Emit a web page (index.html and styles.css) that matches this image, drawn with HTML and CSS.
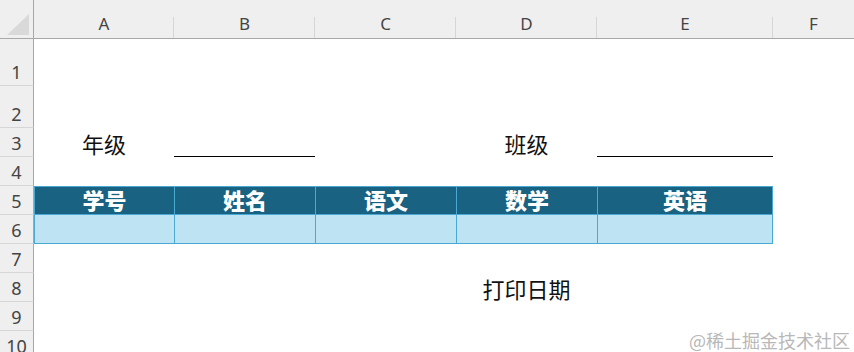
FILE: index.html
```html
<!DOCTYPE html>
<html lang="zh">
<head>
<meta charset="utf-8">
<link rel="stylesheet" href="styles.css">
</head>
<body>
<div class="sheet">
  <div class="corner"><svg width="34" height="39" viewBox="0 0 34 39"><polygon points="7,35 29,14 29,35" fill="#d9d9d9"/></svg></div>
  <div class="colh"><span>A</span></div>
  <div class="colh"><span>B</span></div>
  <div class="colh"><span>C</span></div>
  <div class="colh"><span>D</span></div>
  <div class="colh"><span>E</span></div>
  <div class="colh last"><span>F</span></div>

  <div class="rowh">1</div><div class="cell span6"></div>
  <div class="rowh">2</div><div class="cell span6"></div>

  <div class="rowh">3</div>
  <div class="cell txt">年级</div>
  <div class="cell uline"></div>
  <div class="cell"></div>
  <div class="cell txt">班级</div>
  <div class="cell uline"></div>
  <div class="cell"></div>

  <div class="rowh">4</div><div class="cell span6"></div>

  <div class="rowh">5</div>
  <div class="cell th">学号</div>
  <div class="cell th">姓名</div>
  <div class="cell th">语文</div>
  <div class="cell th">数学</div>
  <div class="cell th end">英语</div>
  <div class="cell"></div>

  <div class="rowh">6</div>
  <div class="cell td"></div>
  <div class="cell td"></div>
  <div class="cell td"></div>
  <div class="cell td"></div>
  <div class="cell td end"></div>
  <div class="cell"></div>

  <div class="rowh">7</div><div class="cell span6"></div>

  <div class="rowh">8</div>
  <div class="cell"></div>
  <div class="cell"></div>
  <div class="cell"></div>
  <div class="cell txt date">打印日期</div>
  <div class="cell"></div>
  <div class="cell"></div>

  <div class="rowh">9</div><div class="cell span6"></div>
  <div class="rowh">10</div><div class="cell span6"></div>
</div>
<div class="watermark">@稀土掘金技术社区</div>
</body>
</html>
```

FILE: styles.css
```css
html, body {
  margin: 0;
  padding: 0;
  background: #ffffff;
  overflow: hidden;
}
body {
  width: 854px;
  height: 352px;
  position: relative;
  font-family: "Noto Sans", "Noto Sans CJK SC", sans-serif;
}
.sheet {
  display: grid;
  grid-template-columns: 34px 140px 141px 141px 141px 176px 1fr;
  grid-template-rows: 39px 47px 42px 29px 29px 29px 29px 29px 29px 29px 29px;
}
.corner {
  background: #efefef;
  border-right: 1px solid #a8a8a8;
  border-bottom: 1px solid #a8a8a8;
  box-sizing: border-box;
}
.corner svg { display: block; }
.colh {
  background: #efefef;
  border-bottom: 1px solid #a8a8a8;
  box-sizing: border-box;
  display: flex;
  align-items: flex-end;
  justify-content: center;
  position: relative;
  font-family: "Noto Sans", sans-serif;
  font-size: 17px;
  line-height: 20px;
  color: #444444;
  padding-bottom: 4px;
}
.colh::after {
  content: "";
  position: absolute;
  right: 0;
  top: 17px;
  bottom: 0;
  width: 1px;
  background: #d6d6d6;
}
.colh.last::after { display: none; }
.rowh {
  background: #efefef;
  border-right: 1px solid #a8a8a8;
  border-bottom: 1px solid #d6d6d6;
  box-sizing: border-box;
  display: flex;
  align-items: flex-end;
  justify-content: center;
  font-family: "Noto Sans", sans-serif;
  font-size: 18px;
  line-height: 20px;
  color: #444444;
  padding-bottom: 3px;
}
.cell {
  box-sizing: border-box;
  min-width: 0;
}
.span6 { grid-column: span 6; }
.txt {
  display: flex;
  align-items: center;
  justify-content: center;
  font-family: "Noto Sans CJK SC", sans-serif;
  font-size: 22px;
  line-height: 28px;
  color: #111111;
}
.date { align-items: flex-end; }
.uline { border-bottom: 1px solid #000000; }
.th {
  background: #196282;
  border-left: 1px solid #4aa9d3;
  border-top: 1px solid #4aa9d3;
  border-bottom: 1px solid #4aa9d3;
  display: flex;
  align-items: center;
  justify-content: center;
  padding-bottom: 3px;
  font-family: "Noto Sans CJK SC", sans-serif;
  font-weight: 900;
  font-size: 22px;
  line-height: 24px;
  color: #ffffff;
}
.td {
  background: #bee4f4;
  border-left: 1px solid #4aa9d3;
  border-bottom: 1px solid #4aa9d3;
}
.end { border-right: 1px solid #4aa9d3; }
.watermark {
  position: absolute;
  right: 4px;
  bottom: 1px;
  font-family: "Noto Sans CJK SC", sans-serif;
  font-size: 18px;
  line-height: 22px;
  color: #b8b8b8;
}
```
